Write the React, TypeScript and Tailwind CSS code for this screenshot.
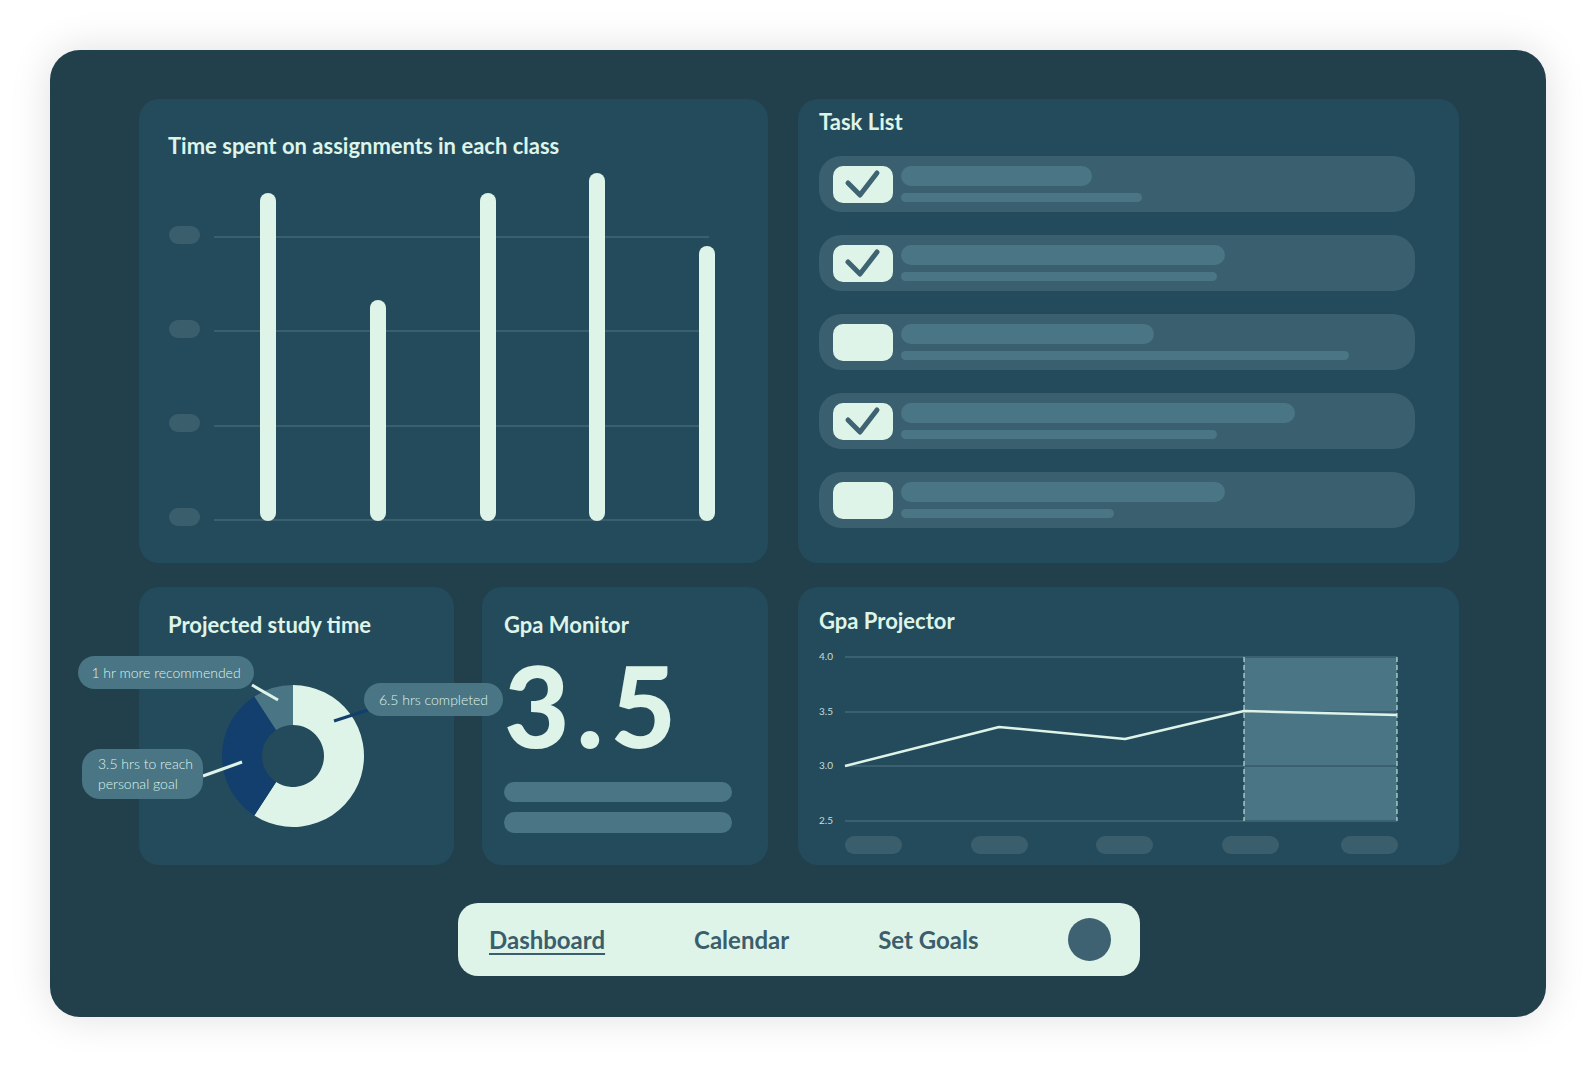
import React from 'react'

const mint = '#dff4e8'

const tasks = [
  { done: true, top: 191, bottom: 241 },
  { done: true, top: 324, bottom: 316 },
  { done: false, top: 253, bottom: 448 },
  { done: true, top: 394, bottom: 316 },
  { done: false, top: 324, bottom: 213 },
]

const bars = [
  { x: 121, top: 35 },
  { x: 231, top: 142 },
  { x: 341, top: 35 },
  { x: 450, top: 15 },
  { x: 560, top: 88 },
]

function arc(cx: number, cy: number, r0: number, r1: number, a0: number, a1: number) {
  const p = (r: number, a: number) => {
    const t = ((a - 90) * Math.PI) / 180
    return [cx + r * Math.cos(t), cy + r * Math.sin(t)]
  }
  const large = a1 - a0 > 180 ? 1 : 0
  const [x0, y0] = p(r1, a0)
  const [x1, y1] = p(r1, a1)
  const [x2, y2] = p(r0, a1)
  const [x3, y3] = p(r0, a0)
  return `M${x0} ${y0} A${r1} ${r1} 0 ${large} 1 ${x1} ${y1} L${x2} ${y2} A${r0} ${r0} 0 ${large} 0 ${x3} ${y3} Z`
}

function Check() {
  return (
    <svg width="60" height="37" viewBox="0 0 60 37">
      <polyline points="15,17 27,29 44,7" fill="none" stroke="#3e6373" strokeWidth="5" strokeLinecap="round" strokeLinejoin="round" />
    </svg>
  )
}

function TimeSpent() {
  return (
    <div className="h-[464px] rounded-[20px] bg-[#234b5c]">
      <h2 className="px-[29px] pt-[35px] text-[22px] font-bold leading-[24px] text-[#dff4e8]">Time spent on assignments in each class</h2>
      <svg width="629" height="405" viewBox="0 0 629 405" className="block">
        {[68, 162, 256, 350].map((y) => (
          <rect key={y} x="30" y={y} width="31" height="18" rx="9" fill="#3b5e6c" />
        ))}
        {[79, 173, 268, 362].map((y) => (
          <line key={y} x1="75" x2="570" y1={y} y2={y} stroke="#3a5f6e" strokeWidth="2" />
        ))}
        {bars.map((b) => (
          <rect key={b.x} x={b.x} y={b.top} width="16" height={362 - b.top + 1} rx="8" fill={mint} />
        ))}
      </svg>
    </div>
  )
}

function TaskList() {
  return (
    <div className="h-[464px] rounded-[20px] bg-[#234b5c] pl-[21px]">
      <h2 className="pt-[11px] text-[22px] font-bold leading-[24px] text-[#dff4e8]">Task List</h2>
      <div className="mt-[22px] flex w-[596px] flex-col gap-[23px]">
        {tasks.map((t, i) => (
          <div key={i} className="flex h-[56px] items-center gap-[8px] rounded-[22px] bg-[#3a5f6e] pl-[14px]">
            <div className="flex h-[37px] w-[60px] items-center justify-center rounded-[10px] bg-[#dff4e8]">
              {t.done && <Check />}
            </div>
            <div className="flex flex-col gap-[7px]">
              <div className="h-[20px] rounded-full bg-[#4a7584]" style={{ width: t.top }} />
              <div className="h-[9px] rounded-full bg-[#4a7584]" style={{ width: t.bottom }} />
            </div>
          </div>
        ))}
      </div>
    </div>
  )
}

function StudyTime() {
  const cx = 154
  const cy = 119
  return (
    <div className="relative h-[278px] w-[315px] rounded-[20px] bg-[#234b5c]">
      <h2 className="pl-[29px] pt-[26px] text-[22px] font-bold leading-[24px] text-[#dff4e8]">Projected study time</h2>
      <svg width="315" height="228" viewBox="0 0 315 228" className="block">
        <path d={arc(cx, cy, 31, 71, 0, 213)} fill={mint} />
        <path d={arc(cx, cy, 31, 71, 213, 327)} fill="#123f6d" />
        <path d={arc(cx, cy, 31, 71, 327, 360)} fill="#4a7584" />
        <line x1="113" y1="48" x2="139" y2="63" stroke={mint} strokeWidth="3" />
        <line x1="229" y1="73" x2="195" y2="84" stroke="#123f6d" strokeWidth="3" />
        <line x1="64" y1="139" x2="103" y2="125" stroke={mint} strokeWidth="3" />
      </svg>
      <div className="absolute left-[-61px] top-[69px] flex h-[33px] w-[176px] items-center justify-center rounded-full bg-[#4a7584] text-[14px] font-light text-[#dff4e8]">
        1 hr more recommended
      </div>
      <div className="absolute left-[225px] top-[96px] flex h-[33px] w-[139px] items-center justify-center rounded-full bg-[#4a7584] text-[14px] font-light text-[#dff4e8]">
        6.5 hrs completed
      </div>
      <div className="absolute left-[-57px] top-[162px] flex h-[50px] w-[121px] flex-col justify-center rounded-[18px] bg-[#4a7584] pl-[16px] text-[14px] font-light leading-[20px] text-[#dff4e8]">
        <span>3.5 hrs to reach</span>
        <span>personal goal</span>
      </div>
    </div>
  )
}

function GpaMonitor() {
  return (
    <div className="h-[278px] w-[286px] rounded-[20px] bg-[#234b5c] pl-[22px]">
      <h2 className="pt-[26px] text-[22px] font-bold leading-[24px] text-[#dff4e8]">Gpa Monitor</h2>
      <div className="mt-[11px] text-[113px] font-black leading-[113px] tracking-[7px] text-[#dff4e8]">3.5</div>
      <div className="mt-[21px] h-[20px] w-[228px] rounded-full bg-[#4a7584]" />
      <div className="mt-[10px] h-[21px] w-[228px] rounded-full bg-[#4a7584]" />
    </div>
  )
}

function GpaProjector() {
  const rows = [
    { label: '4.0', y: 20 },
    { label: '3.5', y: 75 },
    { label: '3.0', y: 129 },
    { label: '2.5', y: 184 },
  ]
  return (
    <div className="h-[278px] rounded-[20px] bg-[#234b5c]">
      <h2 className="pl-[21px] pt-[22px] text-[22px] font-bold leading-[24px] text-[#dff4e8]">Gpa Projector</h2>
      <svg width="661" height="228" viewBox="0 0 661 228" className="mt-[4px] block">
        <rect x="446" y="20" width="153" height="164" fill="#4a7584" />
        {rows.map((r) => (
          <g key={r.label}>
            <text x="21" y={r.y} dominantBaseline="middle" fontSize="10" fill="#c8ddd6" fontFamily="Lato, sans-serif">
              {r.label}
            </text>
            <line x1="47" x2="599" y1={r.y} y2={r.y} stroke="#3b6170" strokeWidth="2" />
          </g>
        ))}
        <line x1="446" x2="446" y1="20" y2="184" stroke={mint} strokeWidth="1" strokeDasharray="5 3" />
        <line x1="599" x2="599" y1="20" y2="184" stroke={mint} strokeWidth="1" strokeDasharray="5 3" />
        <polyline points="47,129 201,90 327,102 446,74 599,78" fill="none" stroke={mint} strokeWidth="2.5" strokeLinejoin="round" />
        {[47, 173, 298, 424, 543].map((x) => (
          <rect key={x} x={x} y="199" width="57" height="18" rx="9" fill="#3b5e6c" />
        ))}
      </svg>
    </div>
  )
}

function NavBar() {
  return (
    <div className="mx-auto flex h-[73px] w-[682px] items-center gap-[89px] rounded-[20px] bg-[#dff4e8] pl-[31px] text-[24px] font-bold text-[#3b5e6c]">
      <span className="underline decoration-2 underline-offset-4">Dashboard</span>
      <span>Calendar</span>
      <span>Set Goals</span>
      <div className="h-[43px] w-[43px] rounded-full bg-[#3e6272]" />
    </div>
  )
}

export default function App() {
  return (
    <div className="min-h-screen bg-white p-[50px] font-['Lato',sans-serif]">
      <div className="h-[967px] w-[1496px] rounded-[30px] bg-[#223f4c] pl-[89px] pt-[49px] shadow-[0_0_40px_rgba(0,0,0,0.13)]">
        <div className="grid w-[1320px] grid-cols-[629px_661px] gap-x-[30px] gap-y-[24px]">
          <TimeSpent />
          <TaskList />
          <div className="flex gap-[28px]">
            <StudyTime />
            <GpaMonitor />
          </div>
          <GpaProjector />
        </div>
        <div className="mt-[38px] w-[1320px]">
          <NavBar />
        </div>
      </div>
    </div>
  )
}
